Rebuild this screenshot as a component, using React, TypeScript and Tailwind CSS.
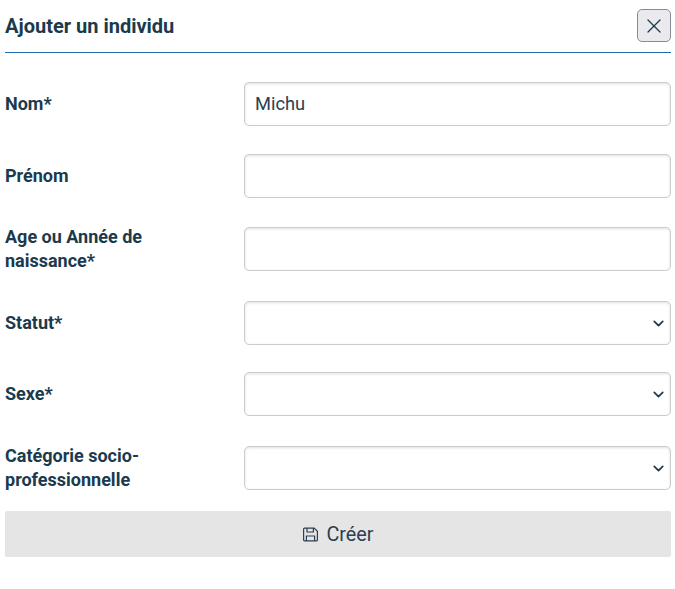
import React from 'react';
import { X, ChevronDown } from 'lucide-react';

const Field: React.FC<{ label: React.ReactNode; value?: string; select?: boolean; className?: string }> = ({
  label,
  value,
  select,
  className,
}) => (
  <div className={`flex items-center ${className ?? ''}`}>
    <label className="w-[239px] shrink-0 text-[18px] leading-[24px] font-bold text-[#1b3a4d]">{label}</label>
    <div className="relative flex-1">
      <div className="h-[44px] rounded-[5px] border border-[#cccccc] bg-white px-[10px] text-[18.3px] leading-[42px] text-[#2c3e50] shadow-[inset_0_1px_3px_rgba(0,0,0,0.12)]">
        {value}
      </div>
      {select && (
        <ChevronDown
          className="absolute right-[4px] top-[14px] h-[17px] w-[17px] text-[#1b3a4d]"
          strokeWidth={2.4}
        />
      )}
    </div>
  </div>
);

export default function App() {
  return (
    <div className="h-[589px] w-[675px] bg-white pl-[5px] pr-[4px] font-['Roboto',sans-serif]">
      {/* Header */}
      <div className="flex h-[53px] items-start justify-between border-b border-[#1f6ab0] pt-[9px]">
        <h1 className="text-[20px] leading-[34px] font-bold text-[#1b3a4d]">Ajouter un individu</h1>
        <button className="flex h-[33px] w-[34px] items-center justify-center rounded-[5px] border border-[#8a8a94] bg-[#e9e9ee] text-[#1b3a4d]">
          <X className="h-[24px] w-[24px]" strokeWidth={1.2} />
        </button>
      </div>

      {/* Form */}
      <Field label="Nom*" value="Michu" className="mt-[29px]" />
      <Field label="Prénom" className="mt-[28px]" />
      <Field
        label={
          <>
            Age ou Année de
            <br />
            naissance*
          </>
        }
        className="mt-[27px]"
      />
      <Field label="Statut*" select className="mt-[28px]" />
      <Field label="Sexe*" select className="mt-[27px]" />
      <Field
        label={
          <>
            Catégorie socio-
            <br />
            professionnelle
          </>
        }
        select
        className="mt-[28px]"
      />

      <button className="mt-[19px] flex h-[46px] w-full items-center justify-center gap-[8px] rounded-[2px] bg-[#e5e5e5] pl-[1px] text-[19.8px] text-[#2c3e50]">
        <svg viewBox="0 0 15 15" className="h-[15px] w-[15px]" fill="none" stroke="currentColor" strokeWidth="1.2">
          <path d="M1.6 1.1h9.6l3.2 3.2v8.6a1 1 0 0 1-1 1H1.6a1 1 0 0 1-1-1V2.1a1 1 0 0 1 1-1z" />
          <path d="M4 1.1v3.9h6.4V1.1" />
          <path d="M3.4 13.9V9h8.2v4.9" />
        </svg>
        <span className="mt-[2px]">Créer</span>
      </button>
    </div>
  );
}
